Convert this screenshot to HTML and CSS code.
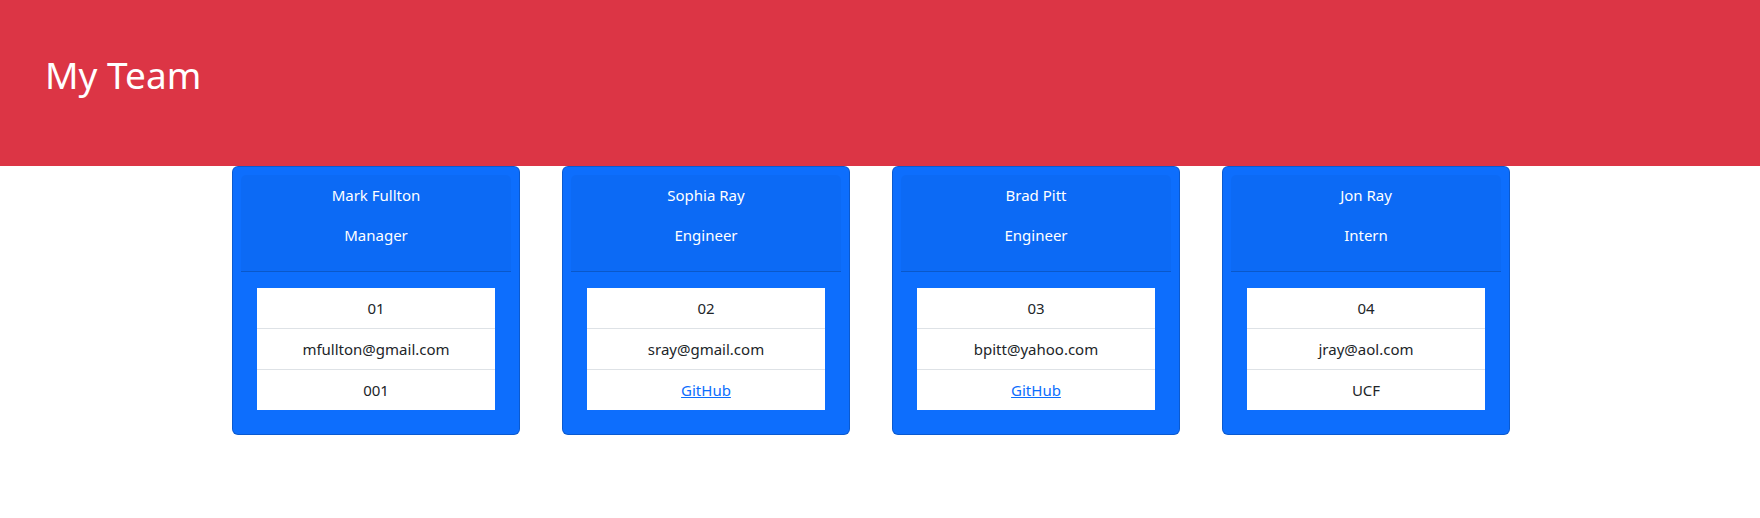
FILE: index.html
```html
<!DOCTYPE html>
<html lang="en">
<head>
<meta charset="utf-8">
<title>My Team</title>
<link rel="stylesheet" href="styles.css">
</head>
<body>
<header class="banner">
  <h1 class="banner-title">My Team</h1>
</header>
<main class="container">
  <div class="row">
    <div class="col">
      <div class="card">
        <div class="card-header">
          <p class="card-line">Mark Fullton</p>
          <p class="card-line">Manager</p>
        </div>
        <div class="card-body">
          <ul class="list">
            <li class="list-item">01</li>
            <li class="list-item">mfullton@gmail.com</li>
            <li class="list-item">001</li>
          </ul>
        </div>
      </div>
    </div>
    <div class="col">
      <div class="card">
        <div class="card-header">
          <p class="card-line">Sophia Ray</p>
          <p class="card-line">Engineer</p>
        </div>
        <div class="card-body">
          <ul class="list">
            <li class="list-item">02</li>
            <li class="list-item">sray@gmail.com</li>
            <li class="list-item"><a class="link" href="#">GitHub</a></li>
          </ul>
        </div>
      </div>
    </div>
    <div class="col">
      <div class="card">
        <div class="card-header">
          <p class="card-line">Brad Pitt</p>
          <p class="card-line">Engineer</p>
        </div>
        <div class="card-body">
          <ul class="list">
            <li class="list-item">03</li>
            <li class="list-item">bpitt@yahoo.com</li>
            <li class="list-item"><a class="link" href="#">GitHub</a></li>
          </ul>
        </div>
      </div>
    </div>
    <div class="col">
      <div class="card">
        <div class="card-header">
          <p class="card-line">Jon Ray</p>
          <p class="card-line">Intern</p>
        </div>
        <div class="card-body">
          <ul class="list">
            <li class="list-item">04</li>
            <li class="list-item">jray@aol.com</li>
            <li class="list-item">UCF</li>
          </ul>
        </div>
      </div>
    </div>
  </div>
</main>
</body>
</html>
```

FILE: styles.css
```css
* { box-sizing: border-box; }

body {
  margin: 0;
  font-family: "Segoe UI", "Noto Sans", "Open Sans", sans-serif;
  font-size: 15px;
  line-height: 24px;
  color: #212529;
  background: #fff;
}

.banner {
  background: #dc3545;
  height: 166px;
  padding: 51px 45px 0;
}

.banner-title {
  margin: 0;
  color: #fff;
  font-size: 37px;
  font-weight: 400;
  line-height: 48px;
}

.container {
  width: 1320px;
  margin: 0 auto;
  padding: 0 12px;
}

.row {
  display: flex;
  margin: 0 -12px;
}

.col {
  flex: 0 0 25%;
  padding: 0 12px;
}

.card {
  width: 288px;
  padding: 8px;
  background: #0d6efd;
  border: 1px solid rgba(0, 0, 0, 0.175);
  border-radius: 6px;
  color: #fff;
  text-align: center;
}

.card-header {
  padding: 8px 16px;
  background: rgba(0, 0, 0, 0.03);
  border-bottom: 1px solid rgba(0, 0, 0, 0.175);
  border-radius: 5px 5px 0 0;
}

.card-line {
  margin: 0 0 16px;
}

.card-body {
  padding: 16px;
}

.list {
  list-style: none;
  margin: 0;
  padding: 0;
  background: #fff;
  color: #212529;
}

.list-item {
  padding: 8px 16px;
  border-bottom: 1px solid #dee2e6;
}

.list-item:last-child {
  border-bottom: 0;
}

.link {
  color: #0d6efd;
  text-decoration: underline;
}
```
